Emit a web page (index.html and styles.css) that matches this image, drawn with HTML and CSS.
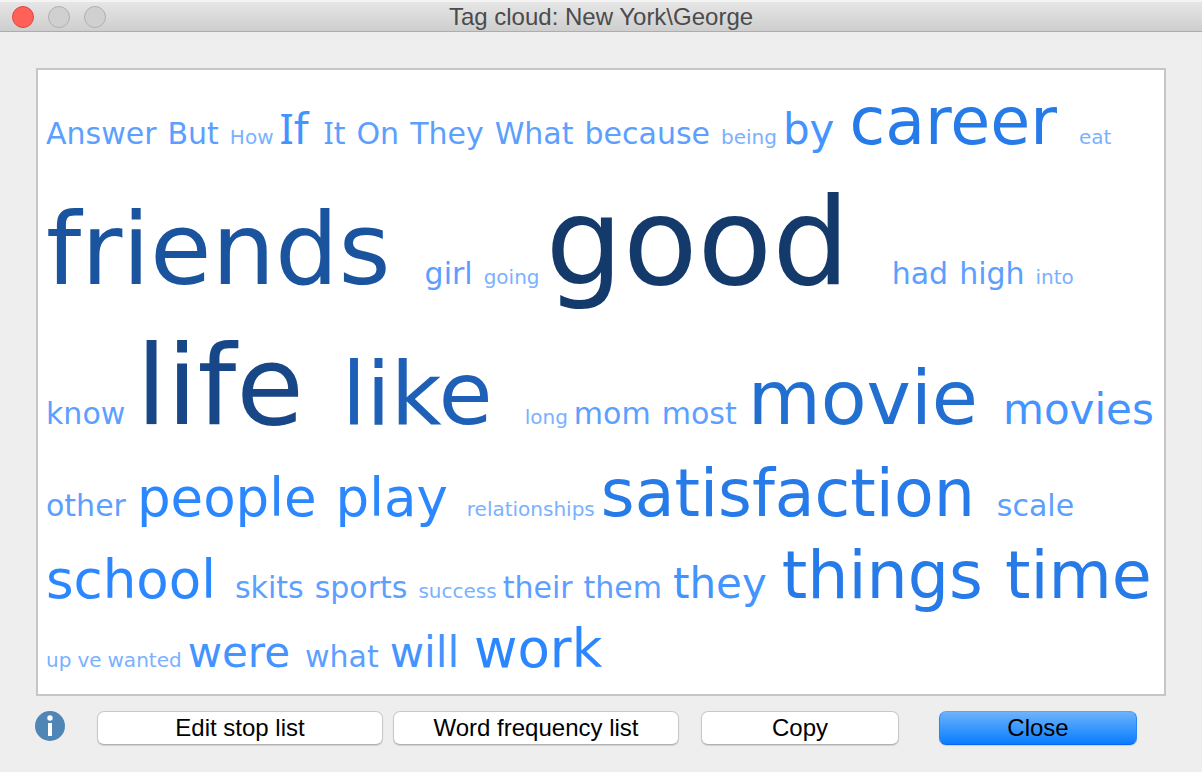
FILE: index.html
```html
<!DOCTYPE html>
<html lang="en">
<head>
    <meta charset="UTF-8">
    <meta name="viewport" content="width=device-width, initial-scale=1.0">
    <title>Tag cloud: New York\George</title>
    <link rel="stylesheet" href="styles.css">
</head>
<body>
    <header class="titlebar">
        <div class="lights">
            <button class="light light-close" aria-label="Close window"></button>
            <button class="light" aria-label="Minimize window"></button>
            <button class="light" aria-label="Zoom window"></button>
        </div>
        <h1>Tag cloud: New York\George</h1>
    </header>
    <main class="panel">
        <ul class="cloud">
            <li class="s2">Answer</li>
            <li class="s2">But</li>
            <li class="s1">How</li>
            <li class="s3"><span class="cap-i">I</span>f</li>
            <li class="s2"><span class="cap-i">I</span>t</li>
            <li class="s2">On</li>
            <li class="s2">They</li>
            <li class="s2">What</li>
            <li class="s2">because</li>
            <li class="s1">being</li>
            <li class="s3">by</li>
            <li class="s5">career</li>
            <li class="s1">eat</li>
            <li class="s8">friends</li>
            <li class="s2">girl</li>
            <li class="s1">going</li>
            <li class="s10">good</li>
            <li class="s2">had</li>
            <li class="s2">high</li>
            <li class="s1">into</li>
            <li class="break" aria-hidden="true"></li>
            <li class="s2">know</li>
            <li class="s9">life</li>
            <li class="s7">like</li>
            <li class="s1">long</li>
            <li class="s2">mom</li>
            <li class="s2">most</li>
            <li class="s6">movie</li>
            <li class="s3">movies</li>
            <li class="s2">other</li>
            <li class="s4">people</li>
            <li class="s4">play</li>
            <li class="s1">relationships</li>
            <li class="s5">satisfaction</li>
            <li class="s2">scale</li>
            <li class="s4">school</li>
            <li class="s2">skits</li>
            <li class="s2">sports</li>
            <li class="s1">success</li>
            <li class="s2">their</li>
            <li class="s2">them</li>
            <li class="s3">they</li>
            <li class="s5">things</li>
            <li class="s5">time</li>
            <li class="s1">up</li>
            <li class="s1">ve</li>
            <li class="s1">wanted</li>
            <li class="s3">were</li>
            <li class="s2">what</li>
            <li class="s3">will</li>
            <li class="s4">work</li>
        </ul>
    </main>
    <footer class="actions">
        <svg class="info" viewBox="0 0 30 30" role="img" aria-label="Info">
            <circle cx="15" cy="15" r="15" fill="#4f86b5"/>
            <circle cx="15" cy="7" r="2.7" fill="#fff"/>
            <rect x="13" y="12" width="4" height="13" fill="#fff"/>
        </svg>
        <div class="group group-lists">
            <button class="btn">Edit stop list</button>
            <button class="btn">Word frequency list</button>
        </div>
        <div class="group group-end">
            <button class="btn">Copy</button>
            <button class="btn btn-default">Close</button>
        </div>
    </footer>
</body>
</html>
```
FILE: styles.css
```css
* {
    box-sizing: border-box;
}
body {
    margin: 0;
    min-height: 100vh;
    display: flex;
    flex-direction: column;
    background: #eeeeee;
    font-family: "Helvetica Neue", "Liberation Sans", Arial, sans-serif;
}

/* title bar */
.titlebar {
    display: grid;
    grid-template-columns: 1fr auto 1fr;
    align-items: center;
    height: 32px;
    padding: 0 12px;
    background: linear-gradient(#e6e6e6, #cecece);
    border-top: 2px solid #f4f4f4;
    border-bottom: 1px solid #adadad;
}
.titlebar h1 {
    margin: 0;
    font-size: 24px;
    line-height: 28px;
    font-weight: normal;
    color: #4b4b4b;
}
.lights {
    display: flex;
    gap: 14px;
}
.light {
    width: 22px;
    height: 22px;
    padding: 0;
    border: 1px solid #b0b0b0;
    border-radius: 50%;
    background: #d0d0d0;
}
.light-close {
    background: #ff6058;
    border-color: #e14640;
}

/* word cloud */
.panel {
    flex: 1;
    margin: 36px 36px 0;
    padding: 8px;
    background: white;
    border: 2px solid #c6c6c6;
}
.cloud {
    display: flex;
    flex-wrap: wrap;
    align-items: baseline;
    align-content: flex-start;
    margin: 0 -24px 0 0;
    padding: 0;
    list-style: none;
    font-family: Verdana, "DejaVu Sans", sans-serif;
}
.break {
    display: block;
    flex-basis: 100%;
}
/* capital I with crossbars */
.cap-i {
    font-family: Verdana, "Noto Sans", sans-serif;
}
.s1 {
    font-size: 20px;
    line-height: 24px;
    margin-right: 6px;
    color: #7ab1ff;
}
.s2 {
    font-size: 30px;
    line-height: 36px;
    margin-right: 11px;
    color: #5c9fff;
}
.s3 {
    font-size: 42px;
    line-height: 48px;
    padding-top: 3px;
    margin-right: 15px;
    color: #4394ff;
}
.s4 {
    font-size: 53px;
    line-height: 62px;
    padding-top: 4px;
    margin-right: 19px;
    color: #2b87ff;
}
.s5 {
    font-size: 65px;
    line-height: 76px;
    padding-top: 6px;
    margin-right: 22px;
    color: #267be9;
}
.s6 {
    font-size: 75px;
    line-height: 88px;
    padding-top: 6px;
    margin-right: 25px;
    color: #226fd2;
}
.s7 {
    font-size: 88px;
    line-height: 102px;
    padding-top: 7px;
    margin-right: 32px;
    color: #1e60b7;
}
.s8 {
    font-size: 100px;
    line-height: 116px;
    padding-top: 8px;
    margin-right: 34px;
    color: #1a539e;
}
.s9 {
    font-size: 110px;
    line-height: 128px;
    padding-top: 9px;
    margin-right: 38px;
    color: #184787;
}
.s10 {
    font-size: 122px;
    line-height: 142px;
    padding-top: 11px;
    margin-right: 42px;
    color: #143a6c;
}

/* bottom buttons */
.actions {
    display: flex;
    align-items: flex-start;
    padding: 15px 65px 27px 35px;
}
.info {
    flex: none;
    width: 30px;
    height: 30px;
    margin-right: 32px;
}
.group {
    display: grid;
    grid-template-columns: 1fr 1fr;
}
.group-lists {
    flex: 582;
    gap: 10px;
    margin-right: 22px;
}
.group-end {
    flex: 436;
    gap: 40px;
}
.btn {
    height: 34px;
    padding: 0;
    border: 1px solid #c8c8c8;
    border-bottom-color: #b0b0b0;
    border-radius: 7px;
    background: white;
    box-shadow: 0 1px 1px rgba(0, 0, 0, 0.12);
    font-family: inherit;
    font-size: 24px;
    line-height: 30px;
    color: black;
}
.btn-default {
    background: linear-gradient(#6cb3fa, #087dff);
    border-color: #5ba4f5 #2a86f8 #0a66f0;
}
```
